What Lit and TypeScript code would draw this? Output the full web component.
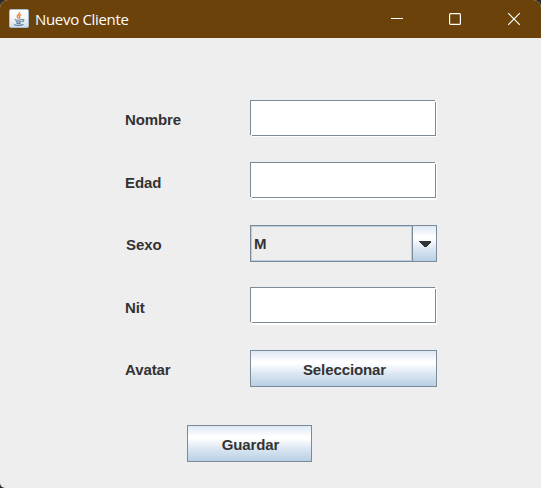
import { LitElement, html, css, svg } from "lit";
import { customElement, property } from "lit/decorators.js";
import { classMap } from "lit/directives/class-map.js";

@customElement("window-bar")
class WindowBar extends LitElement {
  @property() label = "";

  static styles = css`
    :host {
      display: flex;
      align-items: center;
      height: 38px;
      padding-left: 9px;
      background: #6b420a;
      color: #fff;
      font: 15px "Open Sans", "Noto Sans", sans-serif;
    }
    .logo { flex: none; width: 20px; height: 20px; }
    .title {
      flex: 1;
      margin-left: 6px;
      line-height: 20px;
      padding-bottom: 1px;
      letter-spacing: -0.32px;
      white-space: nowrap;
    }
    .controls { display: flex; margin-right: -2px; }
    .control { display: grid; place-items: center; width: 58.5px; height: 38px; }
    .control svg { display: block; width: 14px; height: 14px; fill: none; stroke: #fff; }
  `;

  render() {
    return html`
      <svg class="logo" viewBox="0 0 20 20">
        <defs>
          <linearGradient id="tile" x2="0" y2="1">
            <stop stop-color="#fff" />
            <stop offset=".5" stop-color="#f3f6f8" />
            <stop offset="1" stop-color="#cddce6" />
          </linearGradient>
        </defs>
        <rect x=".5" y=".5" width="19" height="18" rx="1.5" fill="url(#tile)" stroke="#a9c0d2" />
        <path d="M10.6 3.2c.8 1.8-3.3 2.8-2.3 4.7.3.5.9 1 1.1 1.7M12.2 5.6C10.2 6.5 9.9 7.2 10.7 8.3c.3.6.1 1-.4 1.4" fill="none" stroke="#e78442" stroke-width="1.4" />
        <path d="M5.8 10.6c1.6.7 5.4.7 7.5 0M6.8 12.5c1.5.6 3.9.6 5.6.1M7.4 14.2c1.2.4 3 .4 4.3 0M13.3 10.5c2.2-.3 2.1 1.7-.3 2.3M5 15.4c1.6.9 6.2 1 9.5.1" fill="none" stroke="#5c7f98" stroke-width="1.1" />
      </svg>
      <span class="title">${this.label}</span>
      <div class="controls">
        ${[
          svg`<path d="M1 6.5H13" />`,
          svg`<rect x="1.6" y="1.6" width="10.8" height="10.8" rx="1" stroke-width="1.2" />`,
          svg`<path d="M1.2 1.2 12.8 12.8M12.8 1.2 1.2 12.8" stroke-width="1.2" />`,
        ].map((icon) => html`<span class="control"><svg viewBox="0 0 14 14">${icon}</svg></span>`)}
      </div>
    `;
  }
}

type Row = { label: string; kind: "text" | "combo" | "button"; value?: string; inset?: boolean; low?: boolean };

const rows: Row[] = [
  { label: "Nombre", kind: "text" },
  { label: "Edad", kind: "text", low: true },
  { label: "Sexo", kind: "combo", value: "M", inset: true },
  { label: "Nit", kind: "text", low: true },
  { label: "Avatar", kind: "button", value: "Seleccionar" },
];

@customElement("app-root")
class AppRoot extends LitElement {
  static styles = css`
    :host {
      display: block;
      height: 488px;
      overflow: hidden;
      background: #2b2a2a;
      color: #333;
      font: bold 15px/18px "Liberation Sans", Arial, sans-serif;
      letter-spacing: -0.1px;
    }
    * { box-sizing: border-box; }
    .window {
      height: 488px;
      overflow: hidden;
      border-radius: 8px 8px 0 5px;
      background: #eee;
    }
    .form {
      display: grid;
      grid-template-columns: 125px 187px;
      grid-template-rows: 62px 63px 62px 63px 37px;
      padding: 62px 0 0 125px;
    }
    .label { padding-top: 11px; }
    .low { padding-top: 12px; }
    .inset { padding-left: 1px; }
    .slot {
      position: relative;
      width: 187px;
      height: 37px;
    }
    .slot.low { height: 38px; padding: 0; }
    .slot::before {
      content: "";
      position: absolute;
      inset: 1px 0 0 2px;
      background: #fff;
    }
    .field {
      position: relative;
      display: block;
      width: 186px;
      height: 36px;
      border: 0;
      border-radius: 0;
      background:
        linear-gradient(#7a8a99, #7a8a99) 0 0 / 185px 1px no-repeat,
        linear-gradient(#7a8a99, #7a8a99) 0 0 / 1px 35px no-repeat,
        linear-gradient(#7a8a99, #7a8a99) 185px 2px / 1px 34px no-repeat,
        linear-gradient(#7a8a99, #7a8a99) 2px 35px / 184px 1px no-repeat,
        linear-gradient(#fff, #fff) 1px 1px / 185px 34px no-repeat;
      font: inherit;
      outline: none;
      padding: 0 4px;
    }
    .combo, .button { height: 37px; }
    .combo { display: flex; border: 1px solid #7a8a99; }
    .value { flex: 1; border: 1px solid #b8cfe5; padding: 8px 0 0 2px; }
    .arrow {
      display: grid;
      place-items: center;
      width: 24px;
      border-left: 1px solid #7a8a99;
    }
    .arrow svg { display: block; width: 12px; height: 6px; fill: #333; }
    .arrow, .button {
      background-image: linear-gradient(#dde8f3, #fff 30%, #fff 36%, #dde8f3 63%, #b8cfe5);
    }
    .button {
      display: block;
      width: 100%;
      border: 1px solid #7a8a99;
      border-radius: 0;
      padding: 3px 0 0 2px;
      color: inherit;
      font: inherit;
      letter-spacing: inherit;
    }
    .save { width: 125px; margin: 38px 0 0 187px; }
  `;

  control(row: Row) {
    if (row.kind === "text")
      return html`<div class=${classMap({ slot: true, low: !!row.low })}>
        <input class="field" aria-label=${row.label} />
      </div>`;
    if (row.kind === "button") return html`<button class="button">${row.value}</button>`;
    return html`
      <div class="combo">
        <span class="value">${row.value}</span>
        <span class="arrow">
          <svg viewBox="0 0 12 6" shape-rendering="crispEdges"><path d="M0 0H12V1L7 6H5L0 1Z" /></svg>
        </span>
      </div>
    `;
  }

  render() {
    return html`
      <div class="window">
        <window-bar label="Nuevo Cliente"></window-bar>
        <div class="form">
          ${rows.map(
            (row) => html`
              <span class=${classMap({ label: true, inset: !!row.inset, low: !!row.low })}>${row.label}</span>
              <div>${this.control(row)}</div>
            `,
          )}
        </div>
        <button class="button save">Guardar</button>
      </div>
    `;
  }
}
